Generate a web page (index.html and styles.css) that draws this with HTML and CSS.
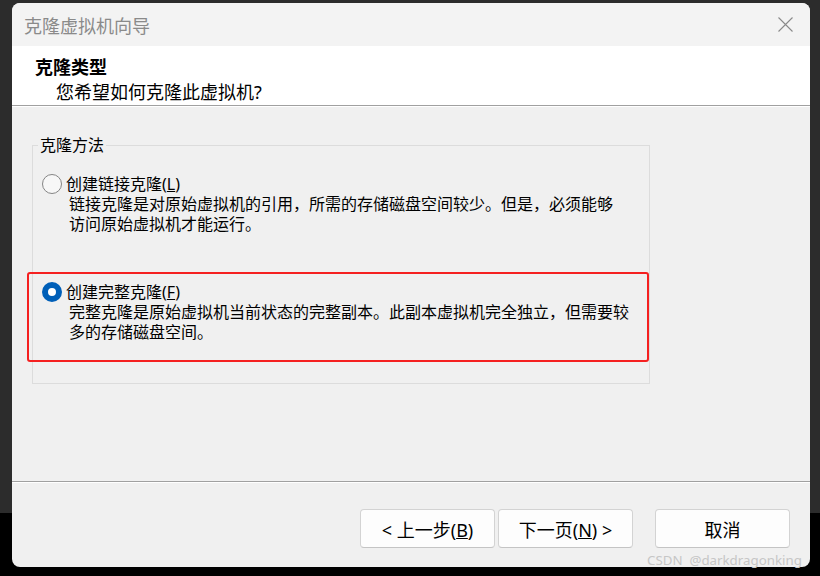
FILE: index.html
```html
<!DOCTYPE html>
<html lang="zh-CN">
  <head>
    <meta charset="UTF-8" />
    <meta name="viewport" content="width=device-width, initial-scale=1.0" />
    <title>克隆虚拟机向导</title>
    <link rel="stylesheet" href="styles.css">
  </head>
  <body>
    <div class="window">
      <div class="titlebar">
        <span class="title">克隆虚拟机向导</span>
        <svg class="close" width="15" height="15" viewBox="0 0 15 15">
          <path d="M0.5 0.5L14.5 14.5M14.5 0.5L0.5 14.5" stroke="#8a8a8a" stroke-width="1.1" fill="none" />
        </svg>
      </div>

      <div class="header">
        <div class="header-title">克隆类型</div>
        <div class="header-sub">您希望如何克隆此虚拟机?</div>
      </div>

      <div class="content">
        <fieldset class="group">
          <legend>克隆方法</legend>

          <div class="option option-linked">
            <label class="option-row">
              <input type="radio" name="clone" class="radio" />
              <span>创建链接克隆(<u>L</u>)</span>
            </label>
            <p class="option-desc">链接克隆是对原始虚拟机的引用，所需的存储磁盘空间较少。但是，必须能够<br>访问原始虚拟机才能运行。</p>
          </div>

          <div class="option option-full">
            <div class="highlight"></div>
            <label class="option-row">
              <input type="radio" name="clone" class="radio" checked />
              <span>创建完整克隆(<u>F</u>)</span>
            </label>
            <p class="option-desc">完整克隆是原始虚拟机当前状态的完整副本。此副本虚拟机完全独立，但需要较<br>多的存储磁盘空间。</p>
          </div>
        </fieldset>
      </div>

      <div class="footer">
        <button class="btn">&lt; 上一步(<u>B</u>)</button>
        <button class="btn btn-next">下一页(<u>N</u>) &gt;</button>
        <button class="btn btn-cancel">取消</button>
      </div>
    </div>

    <div class="watermark">CSDN&nbsp; @darkdragonking</div>
  </body>
</html>
```

FILE: styles.css
```css
body {
  margin: 0;
  height: 576px;
  overflow: hidden;
  position: relative;
  font-family: "Noto Sans", "Noto Sans CJK SC", sans-serif;
  background: linear-gradient(#2c2c2c 513px, #000 513px);
}
.window {
  margin: 3px 0 0 12px;
  width: 798px;
  height: 564px;
  border-radius: 8px;
  overflow: hidden;
  background: #f0f0f0;
  display: flex;
  flex-direction: column;
}
.titlebar {
  height: 43px;
  flex-shrink: 0;
  background: #f3f3f3;
  display: flex;
  align-items: center;
  justify-content: space-between;
  padding: 0 17px 0 12px;
}
.title {
  font-size: 18px;
  color: #8a8a8a;
}
.header {
  flex-shrink: 0;
  height: 50px;
  padding: 9px 0 0 0;
  background: #fff;
  border-bottom: 1px solid #a0a0a0;
}
.header-title {
  padding-left: 23px;
  font-size: 18px;
  font-weight: bold;
  line-height: 25px;
}
.header-sub {
  padding-left: 44px;
  font-size: 18px;
  line-height: 24px;
}
.content {
  flex: 1;
  border-top: 1px solid #fff;
}
.group {
  box-sizing: border-box;
  width: 618px;
  min-width: 0;
  margin: 28px 0 0 20px;
  padding: 0 0 41px 0;
  border: 1px solid #dcdcdc;
}
.group legend {
  margin-left: 5px;
  padding: 0 2px;
  font-size: 16px;
  line-height: 20px;
}
.option {
  position: relative;
  font-size: 16px;
  line-height: 20px;
}
.option-linked {
  margin-top: 19px;
}
.option-full {
  margin-top: 48px;
}
.option-row {
  display: flex;
  align-items: center;
  height: 20px;
}
.radio {
  appearance: none;
  box-sizing: border-box;
  width: 20px;
  height: 20px;
  margin: 0 4px 0 9px;
  border: 1px solid #858585;
  border-radius: 50%;
  background: #f7f7f7;
}
.radio:checked {
  border: 6px solid #005fb8;
  background: #fff;
}
.option-desc {
  margin: 0 0 0 36px;
}
.highlight {
  position: absolute;
  left: -6px;
  top: -10px;
  width: 622px;
  height: 90px;
  box-sizing: border-box;
  border: 2px solid #f52020;
  border-radius: 3px;
  pointer-events: none;
}
.footer {
  flex-shrink: 0;
  height: 86px;
  box-sizing: border-box;
  border-top: 1px solid #a0a0a0;
  box-shadow: inset 0 1px 0 #fff;
  padding: 27px 20px 0 0;
  display: flex;
  justify-content: flex-end;
  align-items: flex-start;
}
.btn {
  width: 135px;
  height: 39px;
  border: 1px solid #d3d3d3;
  border-bottom-color: #c4c4c4;
  border-radius: 4px;
  background: #fdfdfd;
  font-family: "Noto Sans", "Noto Sans CJK SC", sans-serif;
  font-size: 18px;
  color: #000;
  padding: 0;
}
.btn-next {
  margin-left: 3px;
}
.btn-cancel {
  margin-left: 22px;
}
.watermark {
  position: absolute;
  left: 647px;
  top: 551px;
  font-size: 13.3px;
  line-height: 18px;
  color: #c6c6c6;
  white-space: nowrap;
}
```
